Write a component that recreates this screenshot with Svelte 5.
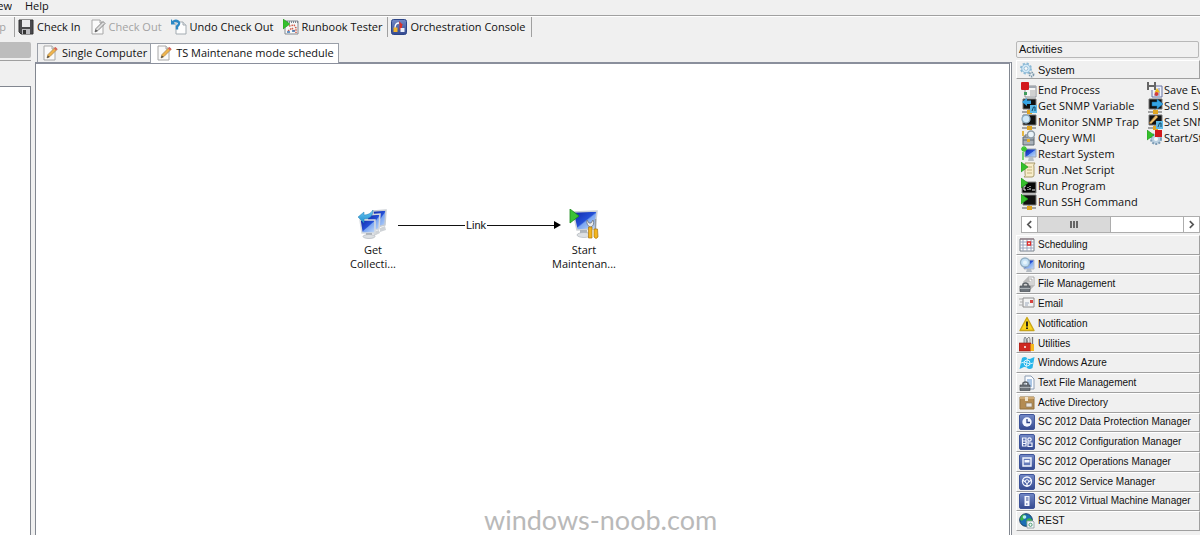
<script>
  const page = '<path d="M2 1h8l3 3v11H2z" fill="#fafafa" stroke="#a8a8a8"/><path d="M10 1v3h3" fill="#e4e4e4" stroke="#a8a8a8"/>';
  const screen = '<path d="M2 1h13v10H2z" fill="#111" stroke="#777"/>';
  const net = '<path d="M8 11v3M1 14h14" stroke="#8a8a8a" stroke-width="1.5"/><path d="M6 12h5v4H6z" fill="#e2a51f"/>';
  const play = '<path d="M0 0l7 5-7 5z" fill="#35c02c" stroke="#1e9318" stroke-width=".6"/>';
  const tile = '<rect x=".5" y=".5" width="15" height="15" rx="1.5" fill="url(#navy)" stroke="#3f549a"/>';
  const gearSmall = '<circle cx="9" cy="9" r="5" fill="#b9cfe0" stroke="#7e9db6" stroke-width="2" stroke-dasharray="2 1.2"/><circle cx="9" cy="9" r="2" fill="#f4f8fb"/>';
  const lock = '<path d="M4 10V8q2.500-2 5 0v2" fill="none" stroke="#5a6066" stroke-width="1.500"/><path d="M1 10h10v5.500H1z" fill="#6d747b" stroke="#464c52" stroke-width=".7"/><path d="M1 12.500h10" stroke="#aab0b5"/>';
  const pencil = '<path d="M5 13l1-3.500 7-7 2 2-7 7z" fill="#f0b44c" stroke="#a3834a" stroke-width=".7"/><path d="M12 3.500l1.500-1.500 2 2L14 5.500z" fill="#d8625f"/><path d="M5 13l.8-2.600 1.800 1.700z" fill="#444"/>';

  const icons = {
    save: '<path d="M1 1h14v14H3l-2-2z" fill="#4a4a4e" stroke="#333"/><path d="M4 1h8v7H4z" fill="#e9e9ec"/><path d="M4 10h8v5H4z" fill="#bcbcc0"/><path d="M5 11h3v4H5z" fill="#333"/>',
    edit: page + pencil,
    editOff: page + '<path d="M5 13l1-3.500 7-7 2 2-7 7z" fill="#ddd" stroke="#777" stroke-width=".9"/><path d="M5 13l.8-2.600 1.800 1.700z" fill="#555"/>',
    undo: '<path d="M5 3h7l3 3v9H5z" fill="#fdfdfd" stroke="#a3abb1"/><path d="M12 3v3h3" fill="#dfe5e9" stroke="#a3abb1"/><path d="M1.500 3.500q3-3 5.500-1t-1 5v3" fill="none" stroke="#2b88c5" stroke-width="2.400"/><path d="M0 0v5.500h4.500z" fill="#2b88c5"/>',
    tester: '<path d="M2 2h13v13H2z" fill="#f7f7f7" stroke="#858b92"/><path d="M2 3h13" stroke="#7b8591" stroke-width="2" stroke-dasharray="1 1"/><path d="M6 7l5-1 2 3v5M5 12l4-3 3 4" fill="none" stroke="#d05c4a" stroke-width="1.500" stroke-dasharray="1.500 1"/><path d="M4 13h3M9 12h3" stroke="#3b78b7" stroke-width="1.500"/>' + play,
    console: '<rect x=".5" y=".5" width="15" height="15" rx="2" fill="url(#navy)" stroke="#2c4588"/><path d="M4 9q0-5 4-5" fill="none" stroke="#fff" stroke-width="1.300"/><path d="M8 2l4 4-1 .5V11H8.500V5z" fill="#d7312a"/><path d="M2.500 8.500h4V13h-4z" fill="#f2b52c"/><path d="M9.500 9h4v4h-4z" fill="#e9eefa"/>',
    gears: '<circle cx="7" cy="6.500" r="4.800" fill="none" stroke="#8dbbd6" stroke-width="2.400" stroke-dasharray="2.100 1.670"/><circle cx="7" cy="6.500" r="4.300" fill="#d1e9f7" stroke="#83b3d3" stroke-width=".8"/><circle cx="7" cy="6.500" r="1.900" fill="#fafafa" stroke="#83aecb" stroke-width=".7"/><circle cx="12.500" cy="12.500" r="2" fill="#eef3f6" stroke="#7c98aa" stroke-width="1.800" stroke-dasharray="1.300 .8"/>',
    end: '<path d="M4 4h11v11H4z" fill="#f6f6f6" stroke="#8c8f94"/><path d="M4 5h11" stroke="#a2a8b0" stroke-width="2"/><path d="M3 10h3v3H3z" fill="#3f9d5c"/><path d="M9 9h5M9 11h5M9 13h5" stroke="#aaa"/><rect width="8" height="8" rx="1" fill="#d2181b"/>',
    snmpGet: screen + net + '<path d="M1 4l5-4v2.500h4v3.500H6V8z" fill="#35a3e4"/><path d="M9 7h7v8H9z" fill="#5fb9e6"/><path d="M11 13l1.500-4h1.500v4" fill="none" stroke="#154a68"/>',
    snmpTrap: screen + net + '<circle cx="5" cy="5" r="4" fill="#cfe8f8" stroke="#8ba9be" stroke-width="1.300"/>',
    wmi: '<path d="M2 7h11v8H2z" fill="#a9b1b9" stroke="#5f6870"/><path d="M4 7V5h7v2M2 10h11" fill="none" stroke="#5f6870"/><path d="M6 9h3v3H6z" fill="#e5af2e"/><circle cx="10" cy="4.500" r="3.500" fill="#eaf3f9" stroke="#8e9ba5" stroke-width="1.400"/><path d="M2 1v5" stroke="#e4b743" stroke-width="2"/>',
    restart: '<path d="M4 3h11v8H4z" fill="url(#blueScreen)" stroke="#9ea5ae"/><path d="M8 11h4l1 4H7z" fill="#b8bec4"/><path d="M2 14V6M0 3h6M3 0v6M1 1l4 4M5 1L1 5" stroke="#3cc433" stroke-width="1.300"/>',
    script: '<path d="M4 1h10q-2 2-1 4v8q0 2-2 2H3q2-1 1-4z" fill="#f8edca" stroke="#a89a6c"/><path d="M6 5h5M6 8h5M6 11h5" stroke="#c3b27d"/>' + play,
    program: '<path d="M1 4h14v11H1z" fill="#080808" stroke="#888"/><path d="M5 8H3v4h2M7 9v1M7 11v1M9 8v1M9 10v2M11 12h3" fill="none" stroke="#eee"/>' + play,
    ssh: screen + net + play,
    saveEvent: '<path d="M5 4h10v11H5z" fill="#eef1fa" stroke="#6673a3"/><path d="M12 6v8M7 13h3" stroke="#7987bd"/><path d="M0 0h9v8H0z" fill="#666"/><path d="M2 0h5v3H2zM2 5h5v3H2z" fill="#f2f2f2"/><path d="M10 6l3 4.500H7.500z" fill="#efb91a"/><circle cx="9.500" cy="12" r="2" fill="#d43c3b"/>',
    snmpSend: screen + net + '<path d="M5 4h5V1l6 5-6 5V8H5z" fill="#35a3e4" stroke="#176da5" stroke-width=".5"/>',
    snmpSet: screen + net + '<path d="M9 7h7v8H9z" fill="#5fb9e6"/><path d="M11 13l1.500-4h1.500v4" fill="none" stroke="#154a68"/><path d="M2 9l7-8 2 2-7 7z" fill="#efc06a" stroke="#8b6130" stroke-width=".7"/>',
    service: gearSmall + '<path d="M8 0h7v7H8z" fill="#d2181b"/>' + play,
    schedule: '<path d="M1 2h14v12H1z" fill="#fff" stroke="#77808a"/><path d="M1 5h14M1 8h14M1 11h14M4 2v12M8 2v12M12 2v12" stroke="#9aa4bd"/><path d="M8.500 5h3v3h-3z" fill="#fff" stroke="#e02d2a" stroke-width="1.300"/><path d="M1 2h14" stroke="#8a6f74"/>',
    monitor: '<path d="M5 3h10v9H5z" fill="url(#blueScreen)" stroke="#b5bcc4"/><path d="M8 12h4l1 3H7z" fill="#b5bcc4"/><circle cx="6" cy="5.500" r="4.500" fill="#c5e1f5" stroke="#93afc3" stroke-width="1.300"/><circle cx="6" cy="5.500" r="2" fill="#e6f4fc"/>',
    files: '<path d="M9 1h6v9H9zM7 3h6v9H7zM5 5h6v9H5z" fill="#fafafa" stroke="#9b9b9b" stroke-width=".8"/>' + lock,
    email: '<path d="M4 2h11v9H4z" fill="#f3f3f3" stroke="#8c8c8c"/><path d="M0 3h4M1 6h3M0 9h4" stroke="#aaa"/><path d="M11 4h3v3h-3z" fill="#d64541"/><path d="M6 7h4M6 9h3" stroke="#9daabd"/>',
    warning: '<path d="M8 1.500L15 14.500H1z" fill="#fbd51d" stroke="#c9a518" stroke-linejoin="round" stroke-width="1.400"/><path d="M8 5.500v5M8 11.500V13" stroke="#161616" stroke-width="1.800"/>',
    tools: '<path d="M5 7V3l1-2 1.500 2v4" fill="#c9cdd1" stroke="#70777e" stroke-width=".8"/><path d="M9 8l-1-5 2-2 1 2v6" fill="#e8e8e8" stroke="#777" stroke-width=".8"/><path d="M0 7h12v8H0z" fill="#cf2a22" stroke="#8f1813" stroke-width=".6"/><path d="M5 11h2" stroke="#fff" stroke-width="1.500"/><path d="M13.500 1v7" stroke="#777" stroke-width="1.300"/><path d="M11.500 8h3.500v7h-3.500z" fill="#f5b820"/>',
    azure: '<path d="M3 3q3-2 5 0t5 0l2.500-1-2 11q-3 2-5.500 0t-5 0l-2.500 1z" fill="#29b6ea"/><path d="M8.500 3L7 13M2 8q3-2 6 0t6 0" fill="none" stroke="#c9effc" stroke-width="1"/><circle cx="8" cy="8" r="3" fill="none" stroke="#d8f4fd"/>',
    text: '<path d="M6 1h6l3 3v10H6z" fill="#fafcff" stroke="#8c9db3"/><path d="M8 5h5M8 7h5M8 9h5M10 11h3" stroke="#5c91cc"/>' + lock,
    directory: '<path d="M1 2h14v12H1z" fill="#b48c52" stroke="#91703f"/><path d="M1 3h14" stroke="#d0aa73" stroke-width="2"/><path d="M6 2h3v4H6z" fill="#efe3cd"/><path d="M7 8h6v4H7z" fill="#ece7e0" stroke="#8a785c" stroke-width=".7"/>',
    dpm: tile + '<circle cx="8" cy="8" r="4.700" fill="#f4f7ff"/><path d="M8 5v3.500h3" fill="none" stroke="#2d4387" stroke-width="1.300"/>',
    sccm: tile + '<path d="M3.500 4H7v8H3.500zM9 9h4v3.500H9z" fill="none" stroke="#f4f7ff" stroke-width="1.200"/><path d="M4 7h3M4 9.500h3M7 8h3" stroke="#f4f7ff"/><circle cx="10.500" cy="5.500" r="1.700" fill="none" stroke="#f4f7ff" stroke-width="1.200"/>',
    scom: tile + '<path d="M4 4h8v8H4z" fill="#657bb9" stroke="#f4f7ff" stroke-width="1.400"/><path d="M5.500 6h5v2.500h-5z" fill="#f4f7ff"/>',
    scsm: tile + '<circle cx="8" cy="7.500" r="4.500" fill="none" stroke="#f4f7ff" stroke-width="1.300"/><circle cx="8" cy="7.500" r="1.800" fill="none" stroke="#f4f7ff"/><path d="M3.500 6l3 2M12.500 6l-3 2M8 9v4" stroke="#f4f7ff" stroke-width="1.300"/>',
    vmm: tile + '<path d="M5.500 3h5v10h-5z" fill="#f4f7ff"/><path d="M7 5h2.500M7 7h2.500" stroke="#344c94"/><path d="M7 11h1.500" stroke="#344c94"/>',
    rest: '<circle cx="7" cy="7" r="6.300" fill="#1c6fb5" stroke="#173e63"/><path d="M3 2q4-1 4 1t-3 4q-2 2-3-1zM8 6q4-2 5 1t-4 5q-3-2-1-6z" fill="#39b24a"/><circle cx="5.500" cy="4" r="1.800" fill="#b5ecf6"/><path d="M8 8h6l1 1v6H8z" fill="#f5f8fa" stroke="#8b989f" stroke-width=".8"/><circle cx="11.500" cy="11.800" r="1.600" fill="none" stroke="#4d9c74"/>',
  };

  const commands = [
    { icon: 'save', label: 'Check In' },
    { icon: 'editOff', label: 'Check Out', disabled: true },
    { icon: 'undo', label: 'Undo Check Out' },
    { icon: 'tester', label: 'Runbook Tester' },
  ];

  const system = [
    ['end', 'End Process'],
    ['snmpGet', 'Get SNMP Variable'],
    ['snmpTrap', 'Monitor SNMP Trap'],
    ['wmi', 'Query WMI'],
    ['restart', 'Restart System'],
    ['script', 'Run .Net Script'],
    ['program', 'Run Program'],
    ['ssh', 'Run SSH Command'],
    ['saveEvent', 'Save Event Log'],
    ['snmpSend', 'Send SNMP Trap'],
    ['snmpSet', 'Set SNMP Variable'],
    ['service', 'Start/Stop Service'],
  ];

  const categories = [
    ['schedule', 'Scheduling'],
    ['monitor', 'Monitoring'],
    ['files', 'File Management'],
    ['email', 'Email'],
    ['warning', 'Notification'],
    ['tools', 'Utilities'],
    ['azure', 'Windows Azure'],
    ['text', 'Text File Management'],
    ['directory', 'Active Directory'],
    ['dpm', 'SC 2012 Data Protection Manager'],
    ['sccm', 'SC 2012 Configuration Manager'],
    ['scom', 'SC 2012 Operations Manager'],
    ['scsm', 'SC 2012 Service Manager'],
    ['vmm', 'SC 2012 Virtual Machine Manager'],
    ['rest', 'REST'],
  ];
</script>

{#snippet icon(name)}
  <svg class="icon" viewBox="0 0 16 16" aria-hidden="true">{@html icons[name]}</svg>
{/snippet}

<svg class="defs" width="0" height="0" aria-hidden="true">
  <defs>
    <linearGradient id="navy" x1="0" y1="0" x2="0" y2="1">
      <stop offset="0" stop-color="#7389c6" /><stop offset="1" stop-color="#34498f" />
    </linearGradient>
    <linearGradient id="blueScreen" x1="0" y1="0" x2="1" y2="1">
      <stop offset="0" stop-color="#0d25a8" /><stop offset=".5" stop-color="#2550d6" /><stop offset=".55" stop-color="#7ca6f0" /><stop offset="1" stop-color="#c8defa" />
    </linearGradient>
    <linearGradient id="sky" x1="0" y1="0" x2="0" y2="1">
      <stop offset="0" stop-color="#6cc8f5" /><stop offset="1" stop-color="#1f8dcc" />
    </linearGradient>
  </defs>
</svg>

<div class="app">
  <nav class="menu">
    <button class="clipped view">View</button>
    <button>Help</button>
  </nav>

  <div class="toolbar">
    <button class="clipped stop" disabled>Stop</button>
    <span class="rule"></span>
    {#each commands as c}
      <button disabled={c.disabled}>{@render icon(c.icon)}{c.label}</button>
    {/each}
    <span class="rule"></span>
    <button>{@render icon('console')}Orchestration Console</button>
    <span class="rule"></span>
  </div>

  <div class="work">
    <aside class="left">
      <div class="caption"></div>
      <div class="strip"></div>
      <div class="tree"></div>
    </aside>

    <main>
      <div class="tabs" role="tablist">
        <button role="tab" aria-selected="false">{@render icon('edit')}Single Computer</button>
        <button role="tab" aria-selected="true" class="active">{@render icon('edit')}TS Maintenane mode schedule</button>
      </div>
      <div class="canvas">
        <div class="node get">
          <svg viewBox="0 0 30 30" aria-hidden="true">
            <path d="M15 2l13-1-1 15-11 3z" fill="url(#blueScreen)" stroke="#c7ccd2" stroke-width="1.500" />
            <path d="M22 19l5-2 1 4-6 2z" fill="#cfd3d7" />
            <path d="M9 6l13-1-1 15-11 3z" fill="url(#blueScreen)" stroke="#d3d7dc" stroke-width="1.500" />
            <path d="M15 23l6-2 1 3-6 3z" fill="#cfd3d7" />
            <path d="M2 11l15 0 0 13-13 0z" fill="url(#blueScreen)" stroke="#d8dce0" stroke-width="1.500" />
            <path d="M8 24h6v3H8z" fill="#aeb4bb" />
            <ellipse cx="11" cy="27.500" rx="6" ry="2" fill="#dde0e3" stroke="#a9afb5" stroke-width=".6" />
            <path d="M0 8l6-5v3q6 0 9-5 0 9-9 9v4z" fill="url(#sky)" stroke="#2381b5" stroke-width=".5" />
          </svg>
          <span>Get Collecti...</span>
        </div>
        <div class="link">
          <i class="line"></i><span>Link</span><i class="line"></i><i class="head"></i>
        </div>
        <div class="node start">
          <svg viewBox="0 0 30 30" aria-hidden="true">
            <path d="M4 3l24-1-2 18-18 1z" fill="url(#blueScreen)" stroke="#cdd1d6" stroke-width="1.500" />
            <path d="M11 21h7l1 5h-8z" fill="#aeb4bb" />
            <ellipse cx="15" cy="26" rx="7" ry="2.500" fill="#dde0e3" stroke="#a9afb5" stroke-width=".6" />
            <path d="M1 0l9 7-9 7z" fill="#3cc238" stroke="#1d8c1d" stroke-width=".8" />
            <path d="M18 11q-1 5 3 7h1q4-2 2-7l-2 3h-2z" fill="#e6e9ec" stroke="#6e757c" stroke-width=".8" />
            <path d="M19.500 18h3.500v11h-3.500z" fill="#f4b51e" stroke="#a87510" stroke-width=".7" />
            <path d="M26.500 10v11" stroke="#969ca2" stroke-width="1.500" />
            <path d="M25 20h3.500l.5 8q-2 3-4 0z" fill="#f4b51e" stroke="#a87510" stroke-width=".7" />
          </svg>
          <span>Start Maintenan...</span>
        </div>
        <div class="watermark">windows-noob.com</div>
      </div>
    </main>

    <aside class="activities">
      <h2>Activities</h2>
      <button class="bar">{@render icon('gears')}System</button>
      <ul>
        {#each system as [name, label]}
          <li>{@render icon(name)}{label}</li>
        {/each}
      </ul>
      <div class="scroll">
        <button aria-label="Scroll left"><svg viewBox="0 0 8 8"><path d="M5.500 1L2.500 4l3 3" /></svg></button>
        <div class="thumb"><i></i><i></i><i></i></div>
        <div class="track"></div>
        <button aria-label="Scroll right"><svg viewBox="0 0 8 8"><path d="M2.500 1l3 3-3 3" /></svg></button>
      </div>
      <div class="categories">
        {#each categories as [name, label]}
          <button class="bar">{@render icon(name)}{label}</button>
        {/each}
      </div>
    </aside>
  </div>
</div>

<style>
  :global(body) { margin: 0; background: #f0f0f0; }
  .defs { position: absolute; }
  .app {
    display: flex;
    flex-direction: column;
    height: 100vh;
    overflow: hidden;
    background: #f0f0f0;
    color: #111;
    font: 11px/14px "Open Sans", "Noto Sans", sans-serif;
  }
  button {
    display: flex;
    align-items: center;
    flex-shrink: 0;
    margin: 0;
    padding: 0;
    border: 0;
    background: none;
    color: inherit;
    font: inherit;
    white-space: nowrap;
  }
  button:disabled { color: #a3a3a3; }
  .icon { width: 16px; height: 16px; flex: none; }
  .clipped { justify-content: flex-end; overflow: hidden; }

  .menu {
    display: flex;
    gap: 13px;
    height: 15px;
    border-bottom: 1px solid #a0a0a0;
    line-height: 12px;
  }
  .menu button { height: 12px; }
  .view { width: 12px; }

  .toolbar {
    display: flex;
    align-items: center;
    height: 20px;
    border-top: 1px solid #fff;
  }
  .toolbar button { gap: 3px; margin-right: 9px; }
  .toolbar .stop { width: 6px; margin-right: 12px; }
  .rule { width: 1px; height: 20px; margin: 0 3px 0 -4px; background: #a0a0a0; }

  .work { display: flex; flex: 1; min-height: 0; padding-top: 3px; }

  .left { display: flex; flex-direction: column; width: 31px; margin-right: 4px; }
  .caption { height: 16px; margin-top: 2px; background: #bdbdbd; border-radius: 0 2px 2px 0; }
  .strip { height: 25px; margin-top: 2px; border-top: 1px solid #a0a0a0; }
  .tree { flex: 1; background: #fff; border: 1px solid #828790; border-width: 1px 1px 0 0; }

  main { display: flex; flex: 1; flex-direction: column; min-width: 0; }
  .tabs { display: flex; align-items: flex-end; height: 22px; padding-left: 2px; }
  .tabs button {
    gap: 4px;
    height: 19px;
    padding: 0 3px 0 4px;
    border: 1px solid #9a9fa8;
    border-width: 1px 0 0 1px;
  }
  .tabs .active {
    z-index: 1;
    height: 20px;
    padding: 0 4px 2px 5px;
    border-width: 1px 1px 0;
    background: #fff;
    margin-bottom: -1px;
  }
  .canvas {
    position: relative;
    flex: 1;
    overflow: hidden;
    background: #fff;
    border: 1px solid #828790;
    border-top: 2px solid #8a8f9c;
    border-bottom: 0;
    border-right: 3px double #828790;
  }
  .node {
    position: absolute;
    top: 145px;
    display: flex;
    flex-direction: column;
    align-items: center;
    gap: 4px;
    width: 70px;
    text-align: center;
  }
  .node svg { width: 30px; height: 30px; }
  .node.get { left: 302px; }
  .node.get span { width: 52px; }
  .node.start { left: 513px; }
  .link {
    position: absolute;
    top: 154px;
    left: 362px;
    display: flex;
    align-items: center;
    width: 163px;
    gap: 1px;
    font-family: "Liberation Sans", Arial, sans-serif;
  }
  .line { flex: 1; height: 1px; background: #111; }
  .head { border: 4px solid transparent; border-left: 7px solid #000; border-right: 0; margin-left: -1px; }
  .watermark {
    position: absolute;
    bottom: 0;
    left: 448px;
    color: #b9b9b9;
    font: 27px/30px Lato, sans-serif;
  }

  .activities {
    display: flex;
    flex-direction: column;
    width: 184px;
    margin-left: 4px;
    overflow: hidden;
    font-family: "Liberation Sans", Arial, sans-serif;
  }
  h2 {
    margin: 1px 1px 2px 0;
    padding: 0 2px;
    border: 1px solid #b8b8b8;
    border-radius: 2px;
    font: inherit;
    line-height: 15px;
  }
  .bar {
    gap: 3px;
    padding-left: 2px;
    border: 1px solid #fff;
    border-right-color: #a0a0a0;
    border-bottom-color: #a0a0a0;
    height: 19px;
  }
  .activities ul {
    display: grid;
    grid-template-rows: repeat(8, 16px);
    grid-auto-flow: column;
    grid-auto-columns: 126px;
    margin: 3px 0 6px;
    padding: 0 0 0 5px;
    list-style: none;
    font-family: "Open Sans", "Noto Sans", sans-serif;
  }
  li { display: flex; align-items: center; gap: 1px; white-space: nowrap; }
  .scroll {
    display: flex;
    height: 15px;
    margin-left: 5px;
    border: 1px solid #adadad;
    background: #fff;
  }
  .scroll button { width: 15px; justify-content: center; }
  .scroll svg { width: 9px; height: 9px; fill: none; stroke: #555; stroke-width: 1.500; }
  .thumb {
    display: flex;
    align-items: center;
    justify-content: center;
    gap: 1px;
    width: 72px;
    border: 1px solid #adadad;
    border-width: 0 1px;
    background: #d9d9d9;
  }
  .thumb i { width: 2px; height: 7px; background: #666; }
  .track { flex: 1; border-right: 1px solid #adadad; }
  .categories { display: flex; flex: 1; flex-direction: column; min-height: 0; margin-top: 2px; padding-bottom: 4px; font-size: 10px; }
  .categories .bar { flex: 1; min-height: 19px; }
</style>
